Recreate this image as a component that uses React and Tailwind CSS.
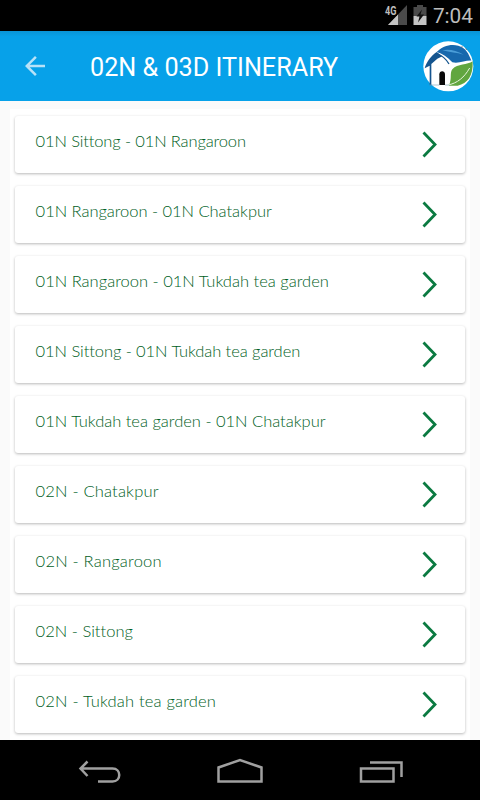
import React from 'react';

const ITEMS = [
  { label: '01N Sittong - 01N Rangaroon', spacing: 'tracking-[-0.13px]' },
  { label: '01N Rangaroon - 01N Chatakpur', spacing: 'tracking-[-0.03px]' },
  { label: '01N Rangaroon - 01N Tukdah tea garden', spacing: 'tracking-[0.01px]' },
  { label: '01N Sittong - 01N Tukdah tea garden', spacing: 'tracking-[-0.07px]' },
  { label: '01N Tukdah tea garden - 01N Chatakpur', spacing: 'tracking-[-0.01px]' },
  { label: '02N - Chatakpur', spacing: 'tracking-[0.19px]' },
  { label: '02N - Rangaroon', spacing: 'tracking-[0.22px]' },
  { label: '02N - Sittong', spacing: 'tracking-[0.03px]' },
  { label: '02N - Tukdah tea garden', spacing: 'tracking-[0.19px]' },
];

const StatusBar = () => (
  <div className="h-[31px] shrink-0 bg-black flex items-start justify-end pr-[7px] text-[#bdbdbd]">
    <svg width="24" height="31" viewBox="0 0 24 31" className="mr-[5px]">
      <path d="M23 5v20H4z" fill="#4a4a4a" />
      <path d="M14 14.5V25H4z" fill="#c4c4c4" />
      <path d="M0 4h13v12H0z" fill="#000" />
      <text x="1" y="15" fontSize="12" fontWeight="700" fill="#bdbdbd" textLength="11.5" lengthAdjust="spacingAndGlyphs" fontFamily="Roboto, sans-serif">4G</text>
    </svg>
    <svg width="14" height="31" viewBox="0 0 14 31" className="mr-[6px]">
      <path d="M4 5h6v2h3.500v9H.5V7H4z" fill="#4a4a4a" />
      <path d="M.5 16h13v9H.5z" fill="#c4c4c4" />
      <path d="M9 9.500L3.500 16.500h3L5 22.500l6-8H7.500z" fill="#111" />
    </svg>
    <span className="font-[Roboto,sans-serif] text-[20.8px] leading-[33px]">7:04</span>
  </div>
);

const Logo = () => (
  <svg width="52" height="52" viewBox="0 0 156 156">
    <circle cx="76" cy="79" r="75" fill="#fff" />
    {/* roof */}
    <path d="M5 85C10 66 24 48 41 36L58 49L43 56L25 72V136H20V77z" fill="#15558f" />
    <path d="M41 36C58 18 83 11 106 17C128 23 138 42 145 62C130 60 108 72 88 67C74 52 58 40 41 36z" fill="#1768ad" />
    <path d="M58 31C78 27 99 31 122 44C100 38 82 37 58 31z" fill="#4a9dd8" />
    <path d="M44 42C60 48 70 58 78 72" fill="none" stroke="#15558f" strokeWidth="4" />
    {/* door */}
    <path d="M49 135V103C49 91 66 91 66 103V135z" fill="#090909" />
    {/* leaf */}
    <path d="M149 64C133 76 104 70 88 88C79 101 88 113 78 137H104C134 131 151 108 149 64z" fill="#61a63f" />
    <path d="M74 135C103 130 124 112 140 84" fill="none" stroke="#e9f6df" strokeWidth="3" />
    <path d="M20 135H49M66 135H80" stroke="#8aa9bd" strokeWidth="2" />
    <path d="M117 18v5M128 25l3 5" stroke="#555" strokeWidth="2" />
  </svg>
);

const Header = () => (
  <header className="h-[70px] shrink-0 bg-linear-to-b from-[#0994d6] to-[#07a1e9] to-8% flex items-center">
    <svg width="30" height="30" viewBox="0 0 24 24" className="ml-5 text-[#b8e2f8]">
      <path d="M20 11H7.83l5.59-5.59L12 4l-8 8 8 8 1.41-1.41L7.83 13H20v-2z" fill="currentColor" />
    </svg>
    <h1 className="ml-10 pt-1 font-[Roboto,sans-serif] text-[25.2px] text-white whitespace-nowrap">02N &amp; 03D ITINERARY</h1>
    <div className="ml-auto mr-[5px]">
      <Logo />
    </div>
  </header>
);

const ItineraryCard = ({ label, spacing }) => (
  <li className="h-[57px] shrink-0 bg-white rounded-[3px] shadow-[0_1px_3px_rgba(0,0,0,0.28)] flex justify-between pl-[20.6px] pr-7">
    <span className={`mt-[13px] font-[Lato,sans-serif] font-light text-[16.5px] leading-6 text-[#006024] whitespace-nowrap ${spacing}`}>
      {label}
    </span>
    <svg width="16" height="28" viewBox="0 0 16 28" className="mt-[14px]">
      <path d="M2.500 2.500L14 14.500 2.500 26.500" fill="none" stroke="#0b7a41" strokeWidth="2.8" />
    </svg>
  </li>
);

const NavBar = () => (
  <nav className="h-[60px] shrink-0 bg-black flex items-center justify-between px-[77px]">
    <svg width="46" height="30" viewBox="0 0 46 30" fill="none" stroke="#a0a0a0" strokeWidth="2.5">
      <path d="M4 13.500h31.500c9 0 9 13 0 13H21M10.500 6.500L3.500 13.500l7 7.500" />
    </svg>
    <svg width="46" height="30" viewBox="0 0 46 30" fill="none" stroke="#a0a0a0" strokeWidth="2.5">
      <path d="M1.500 26.500V12.500L23 5l21.500 7.500v14z" />
    </svg>
    <svg width="46" height="30" viewBox="0 0 46 30" fill="none" stroke="#a0a0a0" strokeWidth="2.5">
      <path d="M4 13.500h32.500v13H4zM13 7.500h31.500V22" />
    </svg>
  </nav>
);

const App = () => (
  <div className="w-[480px] h-[800px] flex flex-col overflow-hidden bg-[#fafafa]">
    <StatusBar />
    <Header />
    <main className="flex-1 min-h-0 pt-2 px-[10px]">
      <ul className="h-full bg-white pt-[7px] px-[5px] flex flex-col gap-[13px]">
        {ITEMS.map((item) => (
          <ItineraryCard key={item.label} {...item} />
        ))}
      </ul>
    </main>
    <NavBar />
  </div>
);

export default App;
